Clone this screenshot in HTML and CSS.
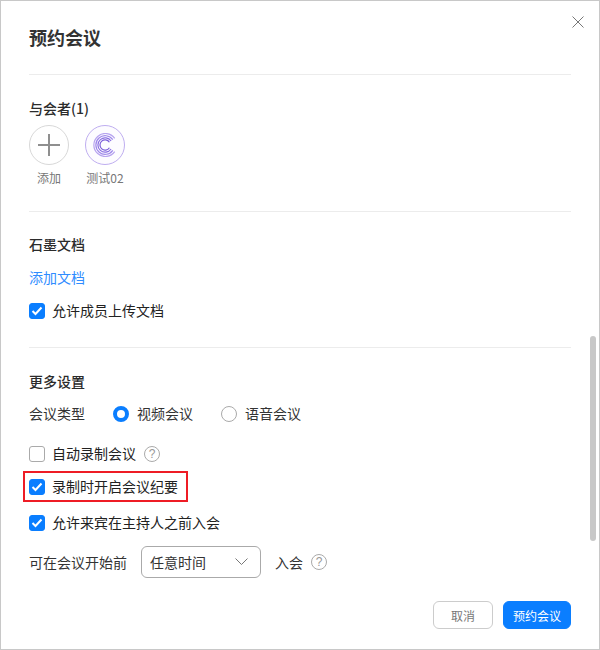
FILE: index.html
```html
<!DOCTYPE html>
<html lang="zh-CN">
<head>
<meta charset="utf-8">
<title>预约会议</title>
<link rel="stylesheet" href="styles.css">
</head>
<body>
<div class="dialog">
  <button class="close" aria-label="关闭">
    <svg width="12" height="12" viewBox="0 0 12 12"><path d="M.5.5l11 11M11.500.5l-11 11" stroke="#777" stroke-width="1" fill="none"/></svg>
  </button>
  <div class="scrollbar"></div>
  <div class="content">
    <header class="head"><h1 class="title">预约会议</h1></header>

    <section class="sec sec-people">
      <h2 class="heading">与会者(1)</h2>
      <div class="people">
        <div class="person">
          <div class="circle circle-add">
            <svg width="22" height="22" viewBox="0 0 22 22"><path d="M11 0v22M0 11h22" stroke="#8f8f8f" stroke-width="2" fill="none"/></svg>
          </div>
          <span class="person-name">添加</span>
        </div>
        <div class="person">
          <div class="circle circle-avatar">
            <svg width="24" height="24" viewBox="0 0 24 24" fill="none" stroke-width="1.200">
              <path d="M21.700 5.300A11.500 11.500 0 1 0 21.700 18.700" stroke="#b7a4ef"/>
              <path d="M19.800 6.700A9.300 9.300 0 1 0 19.800 17.300" stroke="#a08aea"/>
              <path d="M18.100 8A7.200 7.200 0 1 0 18.100 16" stroke="#8a70e2"/>
              <path d="M16.400 9.300A5.100 5.100 0 1 0 16.400 14.700" stroke="#7a5cd8"/>
            </svg>
          </div>
          <span class="person-name">测试02</span>
        </div>
      </div>
    </section>

    <section class="sec sec-docs">
      <h2 class="heading">石墨文档</h2>
      <a class="link" href="#">添加文档</a>
      <div class="check-row check-docs">
        <span class="box on"><svg width="12" height="10" viewBox="0 0 12 10"><path d="M1.500 5l3 3 6-6.500" stroke="#fff" stroke-width="2" fill="none"/></svg></span>
        <span class="lbl">允许成员上传文档</span>
      </div>
    </section>

    <section class="sec-more">
      <h2 class="heading">更多设置</h2>
      <div class="type-row">
        <span class="lbl type-label">会议类型</span>
        <span class="radio on"></span><span class="lbl radio-text">视频会议</span>
        <span class="radio radio-second"></span><span class="lbl radio-text">语音会议</span>
      </div>
      <div class="check-row check-auto">
        <span class="box"></span>
        <span class="lbl">自动录制会议</span>
        <span class="help help-auto">?</span>
      </div>
      <div class="check-row highlight">
        <span class="box on"><svg width="12" height="10" viewBox="0 0 12 10"><path d="M1.500 5l3 3 6-6.500" stroke="#fff" stroke-width="2" fill="none"/></svg></span>
        <span class="lbl">录制时开启会议纪要</span>
      </div>
      <div class="check-row check-allow">
        <span class="box on"><svg width="12" height="10" viewBox="0 0 12 10"><path d="M1.500 5l3 3 6-6.500" stroke="#fff" stroke-width="2" fill="none"/></svg></span>
        <span class="lbl">允许来宾在主持人之前入会</span>
      </div>
      <div class="join-row">
        <span>可在会议开始前</span>
        <div class="select">
          <span>任意时间</span>
          <svg width="13" height="8" viewBox="0 0 13 8"><path d="M.5.500L6.500 6.500l6-6" stroke="#777" stroke-width="1" fill="none"/></svg>
        </div>
        <span>入会</span>
        <span class="help help-join">?</span>
      </div>
    </section>

    <footer class="foot">
      <button class="btn btn-cancel">取消</button>
      <button class="btn btn-primary">预约会议</button>
    </footer>
  </div>
</div>
</body>
</html>
```
FILE: styles.css
```css
* { box-sizing: border-box; }
html, body { margin: 0; padding: 0; }
body {
  width: 600px;
  height: 650px;
  background: #fff;
  font-family: "Noto Sans CJK SC", "Liberation Sans", sans-serif;
  font-size: 14px;
  color: #2b2b2b;
  overflow: hidden;
}
.dialog {
  position: relative;
  width: 600px;
  height: 650px;
  border: 1px solid #c8c8c8;
  background: #fff;
}
.content {
  display: flex;
  flex-direction: column;
  height: 100%;
  padding: 0 28px;
}
.close {
  position: absolute;
  top: 15px;
  left: 571px;
  width: 12px;
  height: 12px;
  padding: 0;
  border: 0;
  background: none;
  display: flex;
}
.scrollbar {
  position: absolute;
  left: 589px;
  top: 335px;
  width: 6px;
  height: 205px;
  border-radius: 3px;
  background: #c8c8c8;
}
.head {
  height: 74px;
  border-bottom: 1px solid #ececec;
  padding-top: 23px;
}
.title {
  margin: 0;
  font-size: 18px;
  line-height: 26px;
  font-weight: 700;
  color: #333;
}
.heading {
  margin: 0;
  font-size: 14px;
  line-height: 20px;
  font-weight: 500;
  color: #2b2b2b;
}
.sec { border-bottom: 1px solid #ececec; }
.sec-people { height: 137px; padding-top: 23px; }
.people { display: flex; gap: 16px; margin-top: 7px; }
.person { width: 40px; display: flex; flex-direction: column; align-items: center; }
.circle {
  width: 40px;
  height: 40px;
  border-radius: 50%;
  display: flex;
  align-items: center;
  justify-content: center;
  flex: none;
}
.circle-add { border: 1px solid #d8d8d8; }
.circle-avatar { border: 1px solid #bfaef0; background: #fdfcff; }
.person-name {
  margin-top: 4px;
  font-size: 12px;
  line-height: 17px;
  color: #777;
  white-space: nowrap;
}
.sec-docs { height: 136px; padding-top: 22px; }
.link {
  display: block;
  margin-top: 13px;
  line-height: 20px;
  color: #2f8cff;
  text-decoration: none;
}
.check-row {
  display: flex;
  align-items: center;
  gap: 7px;
  line-height: 20px;
  color: #222;
}
.lbl { line-height: 18px; padding-bottom: 2px; }
.check-docs { margin-top: 14px; }
.box {
  width: 16px;
  height: 16px;
  flex: none;
  border: 1px solid #aaa;
  border-radius: 3px;
  display: flex;
  align-items: center;
  justify-content: center;
  background: #fff;
}
.box.on { background: #0a7eff; border-color: #0a7eff; }
.sec-more { padding-top: 23px; }
.type-row { display: flex; align-items: center; margin-top: 13px; line-height: 20px; color: #333; }
.type-label { width: 84px; }
.radio {
  width: 16px;
  height: 16px;
  border-radius: 50%;
  border: 1px solid #aaa;
  flex: none;
}
.radio.on { border: 4px solid #0a7eff; }
.radio-text { margin-left: 8px; width: 56px; }
.radio-second { margin-left: 28px; }
.check-auto { margin-top: 20px; }
.help {
  width: 16px;
  height: 16px;
  flex: none;
  border: 1px solid #aaa;
  border-radius: 50%;
  color: #999;
  font-size: 12px;
  line-height: 14px;
  text-align: center;
  font-family: "Liberation Sans", sans-serif;
}
.help-auto { margin-left: 1px; }
.highlight {
  width: 165px;
  height: 31px;
  margin: 7px 0 0 -6px;
  padding: 1px 0 0 4px;
  border: 2px solid #ee1c25;
}
.check-allow { margin-top: 11px; }
.join-row { display: flex; align-items: center; margin-top: 13px; line-height: 20px; color: #333; }
.select {
  width: 120px;
  height: 32px;
  margin: 0 14px;
  padding: 0 12px 0 8px;
  border: 1px solid #aaa;
  border-radius: 6px;
  display: flex;
  align-items: center;
  justify-content: space-between;
}
.help-join { margin-left: 8px; }
.foot {
  display: flex;
  justify-content: flex-end;
  gap: 10px;
  margin-top: 23px;
}
.btn {
  height: 28px;
  padding: 1px 0 0;
  border-radius: 6px;
  font-family: inherit;
  font-size: 12px;
  line-height: 16px;
}
.btn-cancel { width: 60px; background: #fff; border: 1px solid #ccc; color: #777; }
.btn-primary { width: 68px; background: #0a7eff; border: 1px solid #0a7eff; color: #fff; }
```
